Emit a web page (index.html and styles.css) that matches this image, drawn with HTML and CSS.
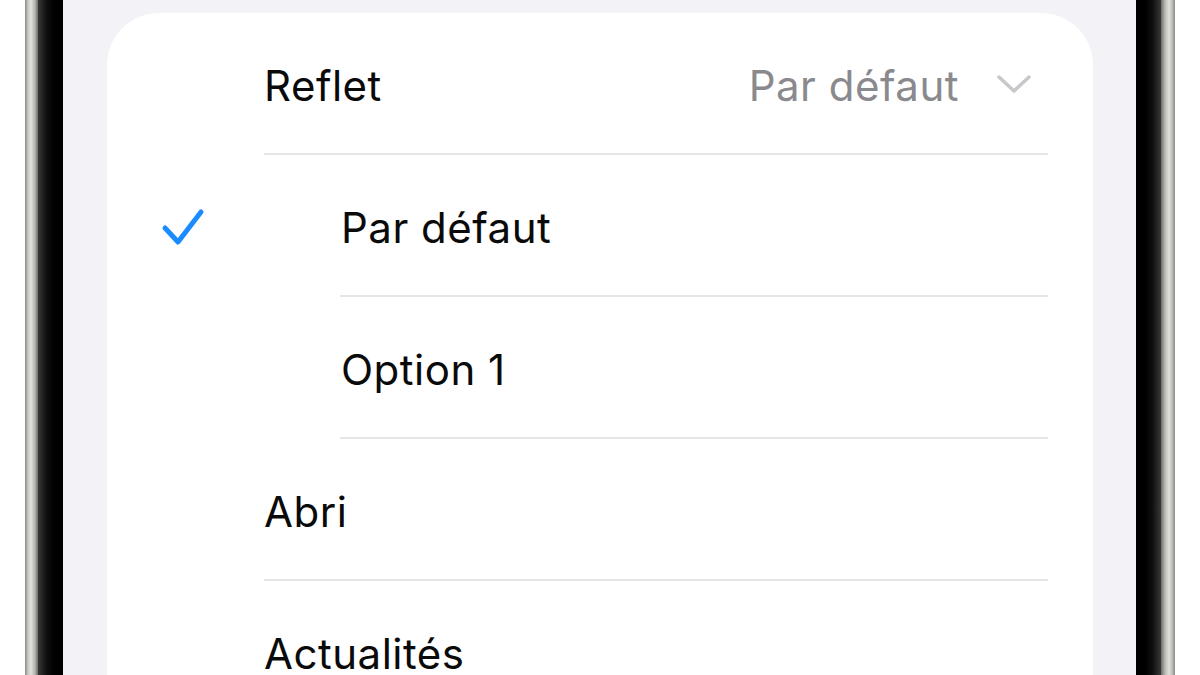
FILE: index.html
```html
<!DOCTYPE html>
<html lang="fr">
<head>
    <meta charset="UTF-8">
    <meta name="viewport" content="width=device-width, initial-scale=1.0">
    <title>Reflet</title>
    <link rel="stylesheet" href="styles.css">
</head>
<body>
    <div class="frame">
        <div class="bezel">
            <div class="screen">
                <div class="card">
                    <div class="row">
                        <div class="lead"></div>
                        <div class="cell">
                            <span class="label">Reflet</span>
                            <span class="value">
                                Par défaut
                                <svg class="chevron" width="34" height="20" viewBox="0 0 34 20">
                                    <path d="M2 3 L17 17 L32 3" fill="none" stroke="#c7c7cc" stroke-width="3.5" stroke-linecap="round" stroke-linejoin="round"/>
                                </svg>
                            </span>
                        </div>
                    </div>

                    <div class="row sub">
                        <div class="lead">
                            <svg class="check" width="44" height="40" viewBox="0 0 44 40">
                                <path d="M4 20 L17 34 L40 4" fill="none" stroke="#1a8cff" stroke-width="5" stroke-linecap="round" stroke-linejoin="round"/>
                            </svg>
                        </div>
                        <div class="cell">
                            <span class="label">Par défaut</span>
                        </div>
                    </div>

                    <div class="row sub">
                        <div class="lead"></div>
                        <div class="cell">
                            <span class="label">Option 1</span>
                        </div>
                    </div>

                    <div class="row">
                        <div class="lead"></div>
                        <div class="cell">
                            <span class="label">Abri</span>
                        </div>
                    </div>

                    <div class="row">
                        <div class="lead"></div>
                        <div class="cell">
                            <span class="label">Actualités</span>
                        </div>
                    </div>
                </div>
            </div>
        </div>
    </div>
</body>
</html>
```

FILE: styles.css
```css
html, body { margin: 0; height: 100%; overflow: hidden; background: #ffffff; font-family: Inter, "Noto Sans", sans-serif; }

/* phone edges */
.frame { margin-left: 25px; width: 1150px; height: 675px; padding: 0 14px 0 13px; box-sizing: border-box;
    background: linear-gradient(90deg, #8d8b87 0px, #c9c7c1 3px, #e4e2dc 6px, #b5b3ad 10px, #6b6a67 13px, transparent 13px, transparent 1136px, #6b6a67 1136px, #b9b7b1 1140px, #e2e0da 1144px, #c2c0ba 1147px, #8d8b87 1150px); }
.bezel { height: 100%; padding: 0 25px; box-sizing: border-box;
    background: linear-gradient(90deg, #3a3a3a 0px, #111 8px, #000 16px, #000 calc(100% - 16px), #111 calc(100% - 8px), #3a3a3a 100%); }
.screen { height: 100%; background: #f2f2f7; padding: 13px 43px 0 44px; box-sizing: border-box; overflow: hidden; }

.card { background: #ffffff; border-radius: 52px 52px 0 0; padding-right: 45px; height: 100%; overflow: hidden; }

.row { display: flex; }
.lead { width: 157px; flex-shrink: 0; display: flex; align-items: center; }
.row.sub .lead { width: 233px; }
.check { margin-left: 54px; margin-top: 4px; }

.cell { flex: 1; height: 142px; box-sizing: border-box; padding-top: 5px; border-bottom: 2px solid #e5e5e8; display: flex; align-items: center; justify-content: space-between; padding-right: 17px; }
.row.sub .cell { padding-left: 1px; }

.label { font-size: 42px; color: #0a0a0a; letter-spacing: 0.5px; }
.value { font-size: 42px; color: #8a8a8e; display: flex; align-items: center; gap: 38px; letter-spacing: 0.5px; }
.chevron { margin-top: -4px; }
```
